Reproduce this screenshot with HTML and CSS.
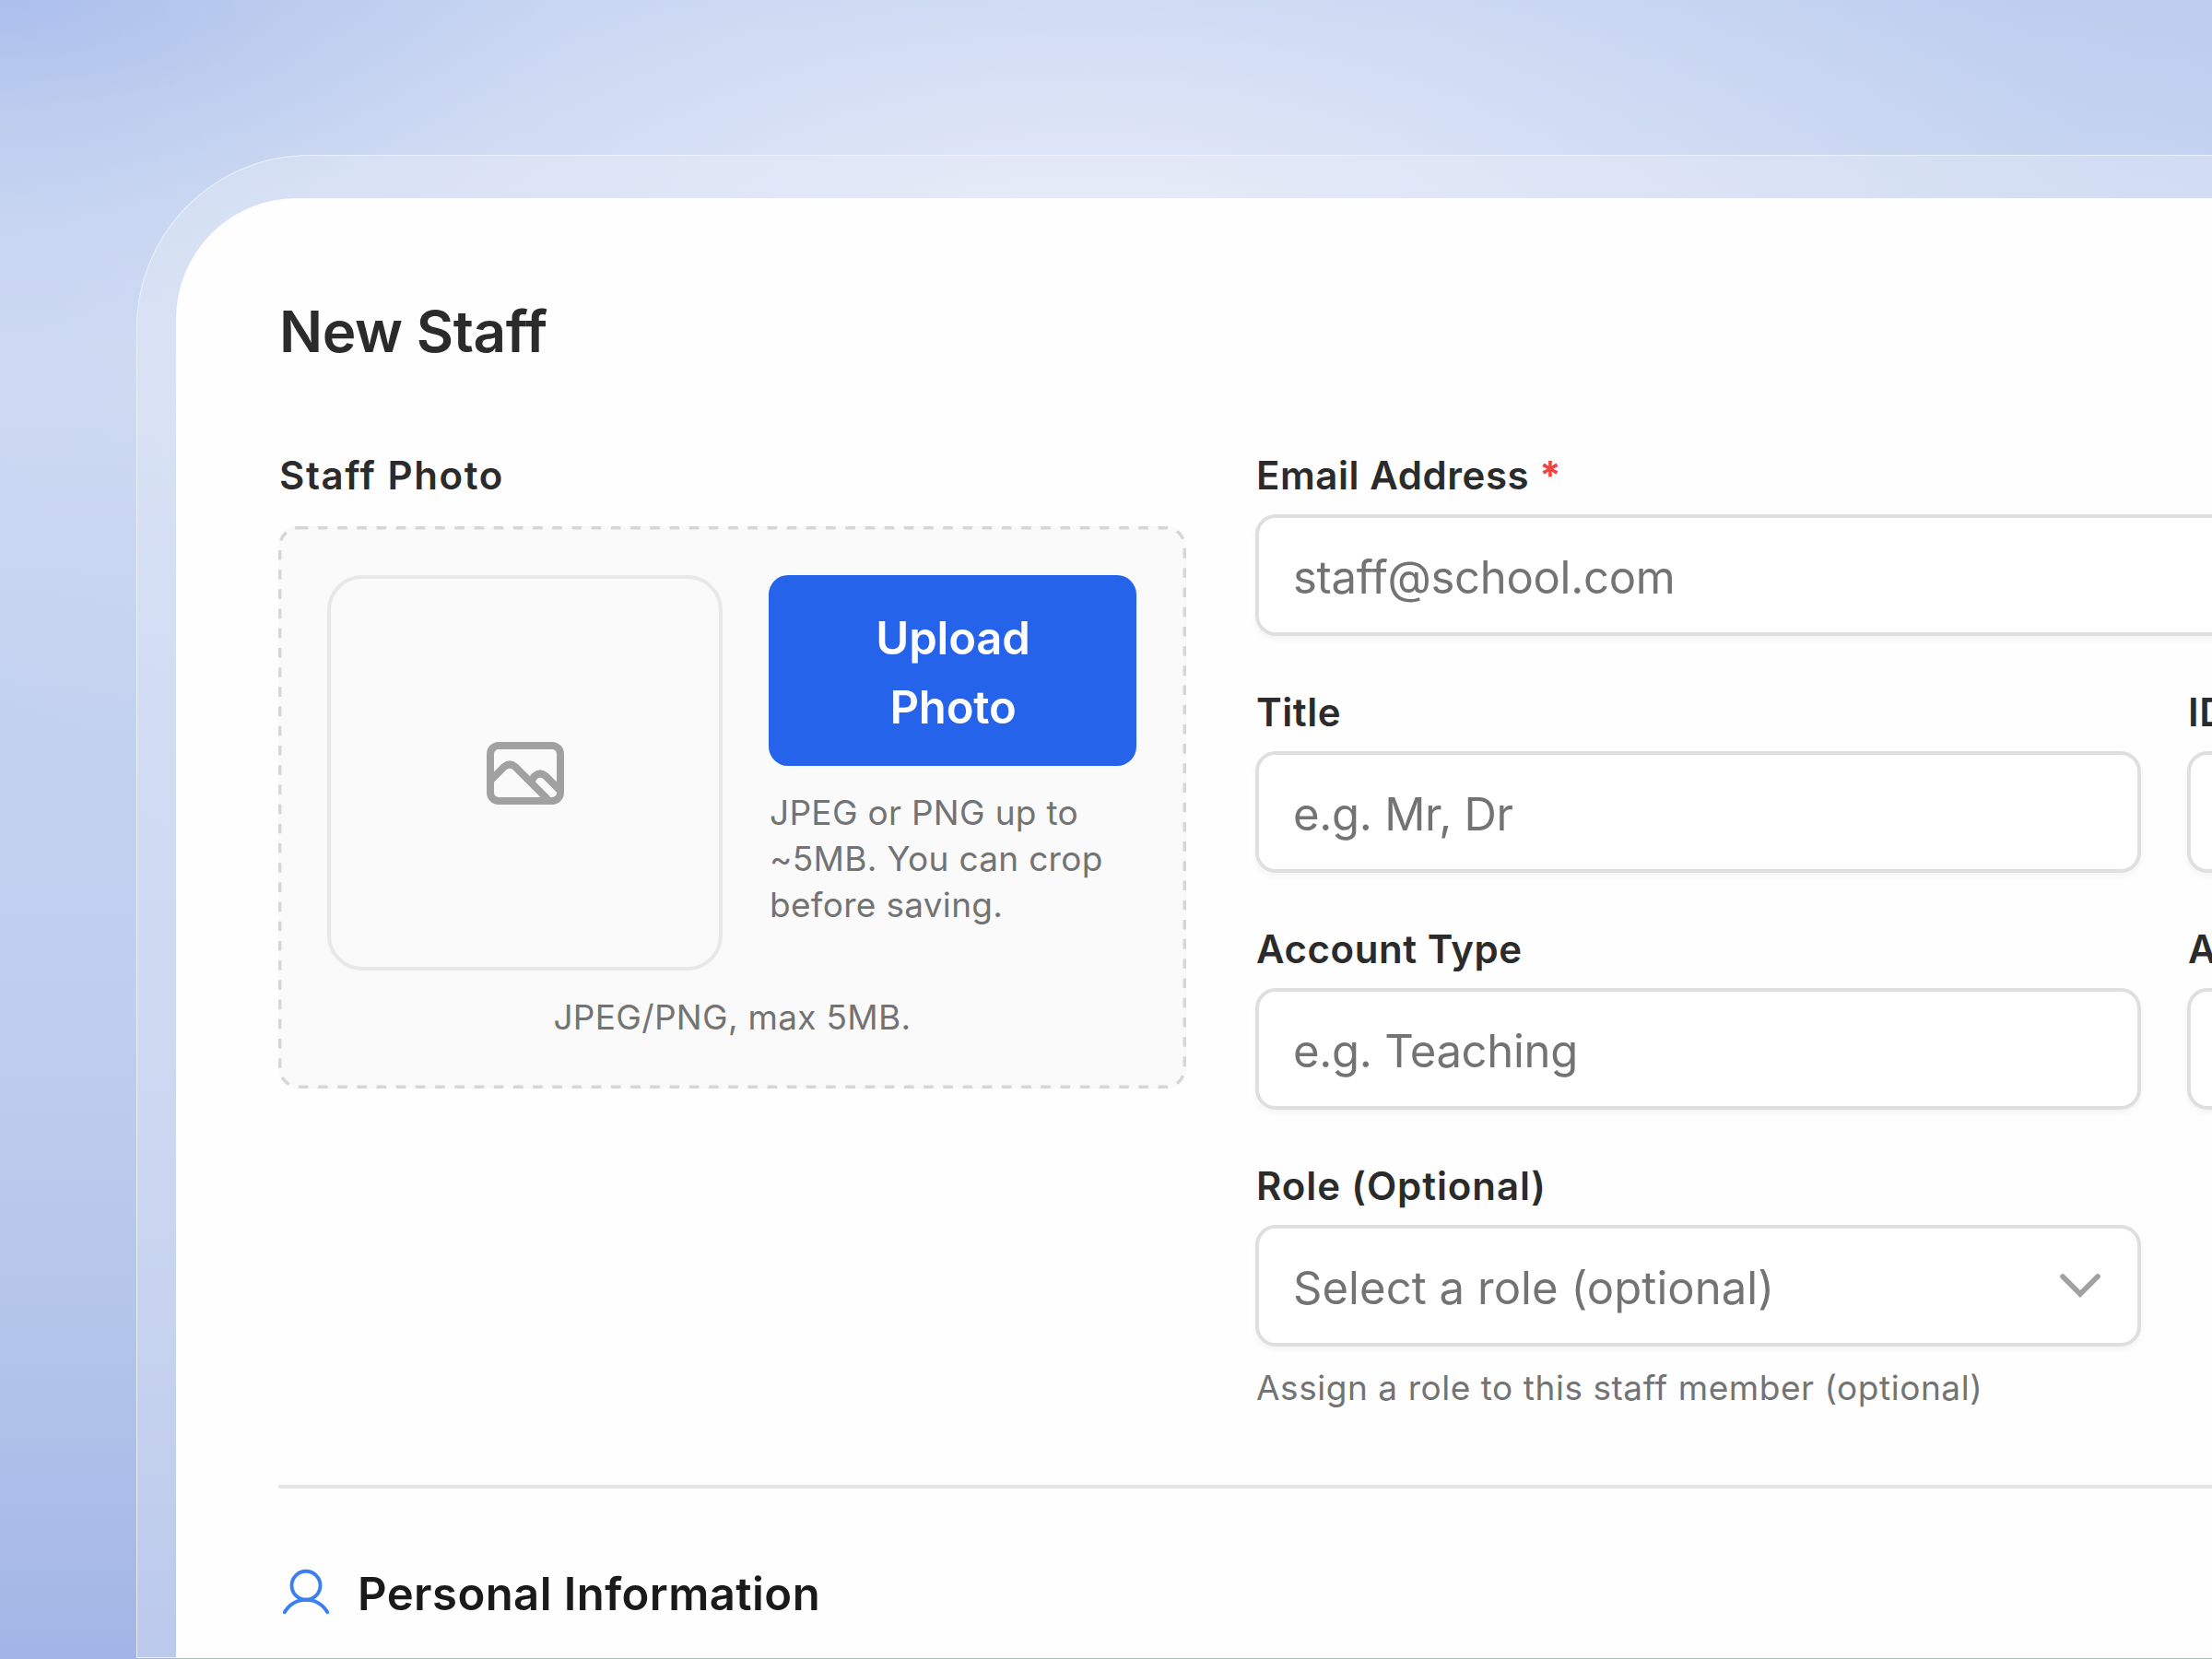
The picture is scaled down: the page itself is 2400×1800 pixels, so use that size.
FILE: index.html
```
<!DOCTYPE html>
<html lang="en">
<head>
    <meta charset="UTF-8">
    <meta name="viewport" content="width=device-width, initial-scale=1.0">
    <title>New Staff</title>
    <link rel="stylesheet" href="styles.css">
</head>
<body>
<div class="frame">
<div class="card">
    <h1 class="page-title">New Staff</h1>
    <div class="form-columns">
        <div class="photo-column">
            <div class="label photo-label">Staff Photo</div>
            <div class="photo-box">
                <svg class="dashes" width="985" height="610">
                    <rect x="1.7" y="1.7" width="981.6" height="606.6" rx="20"/>
                </svg>
                <div class="photo-row">
                    <div class="preview">
                        <svg class="image-icon" width="84" height="68" viewBox="0 0 84 68">
                            <rect x="4" y="4" width="76" height="60" rx="9"/>
                            <path d="M4 42L19 27Q25 22 31 27L66 62"/>
                            <path d="M48 43L52 37Q58 32 64 37L80 53"/>
                        </svg>
                    </div>
                    <div class="upload">
                        <button class="upload-btn" type="button">Upload<br>Photo</button>
                        <p class="hint upload-hint">JPEG or PNG up to<br>~5MB. You can crop<br>before saving.</p>
                    </div>
                </div>
                <p class="hint photo-hint">JPEG/PNG, max 5MB.</p>
            </div>
        </div>
        <div class="fields">
            <div class="field wide">
                <label class="label" for="email">Email Address <span class="required">*</span></label>
                <input class="input" id="email" type="text" placeholder="staff@school.com">
            </div>
            <div class="field">
                <label class="label" for="title">Title</label>
                <input class="input" id="title" type="text" placeholder="e.g. Mr, Dr">
            </div>
            <div class="field">
                <label class="label" for="staff-id">ID</label>
                <input class="input" id="staff-id" type="text">
            </div>
            <div class="field">
                <label class="label" for="account-type">Account Type</label>
                <input class="input" id="account-type" type="text" placeholder="e.g. Teaching">
            </div>
            <div class="field">
                <label class="label" for="account">A</label>
                <input class="input" id="account" type="text">
            </div>
            <div class="field">
                <div class="label role-label">Role (Optional)</div>
                <div class="input select">
                    <span class="select-text">Select a role (optional)</span>
                    <svg class="chevron" width="46" height="28" viewBox="0 0 46 28">
                        <path d="M4 4L23 23L42 4"/>
                    </svg>
                </div>
                <p class="hint role-hint">Assign a role to this staff member (optional)</p>
            </div>
        </div>
    </div>
    <div class="section">
        <svg class="user-icon" width="62" height="62" viewBox="0 0 256 256">
            <circle cx="128" cy="96" r="64"/>
            <path d="M32 216c19.4-33.5 54.6-56 96-56s76.6 22.5 96 56"/>
        </svg>
        <h2 class="section-title">Personal Information</h2>
    </div>
</div>
</div>
</body>
</html>
```
FILE: styles.css
```
* {
    box-sizing: border-box;
}

body {
    margin: 0;
    height: 1800px;
    padding: 168px 0 0 148px;
    overflow: hidden;
    font-family: Inter, "Liberation Sans", sans-serif;
    color: #2b2b2b;
    background:
        radial-gradient(ellipse 620px 240px at 0 0, rgba(163, 184, 234, 0.65) 0%, rgba(170, 190, 234, 0.25) 50%, rgba(163, 184, 234, 0) 100%),
        radial-gradient(ellipse 1600px 800px at 1180px 300px, #e6eafa 0%, rgba(220, 228, 246, 0.7) 35%, rgba(205, 218, 243, 0.3) 70%, rgba(200, 214, 243, 0) 100%),
        linear-gradient(180deg, #b9caee 0%, #c4d2f0 12%, #ced9f2 22%, #c3d1f0 42%, #bfcdef 62%, #b4c5ea 80%, #a3b5e6 100%);
}

.frame {
    height: 1631px;
    padding: 46px 0 0 42px;
    border: 1px solid rgba(238, 245, 255, 0.85);
    border-right: none;
    border-radius: 188px 0 0 0;
    background: rgba(240, 243, 250, 0.32);
}

.card {
    height: 1584px;
    padding: 0 0 0 112px;
    border-radius: 131px 0 0 0;
    background-color: #fefefe;
    overflow: hidden;
}

.page-title {
    margin: 0;
    padding-top: 105px;
    font-size: 62px;
    line-height: 80px;
    font-weight: 600;
    letter-spacing: -0.4px;
}

.form-columns {
    display: flex;
    gap: 75px;
    height: 1215px;
    margin-left: -1px;
    padding-top: 90px;
    border-bottom: 4px solid #e5e5e5;
}

.photo-column {
    width: 985px;
    flex-shrink: 0;
}

.label {
    display: block;
    height: 68px;
    padding-left: 1px;
    font-size: 42px;
    line-height: 52px;
    font-weight: 600;
    letter-spacing: 0.55px;
    white-space: nowrap;
}

.photo-label {
    height: 81px;
    letter-spacing: 1.6px;
}

.role-label {
    letter-spacing: 0.9px;
}

.required {
    color: #ef4444;
    font-weight: 700;
}

.photo-box {
    position: relative;
    height: 610px;
    padding: 53px;
    border-radius: 20px;
    background-color: #fafafa;
}

.dashes {
    position: absolute;
    top: 0;
    left: 0;
    fill: none;
    stroke: #d6d6d6;
    stroke-width: 3.4;
    stroke-dasharray: 10.6 10.6;
}

.photo-row {
    display: flex;
    gap: 50px;
}

.preview {
    width: 429px;
    height: 429px;
    display: flex;
    align-items: center;
    justify-content: center;
    border: 4px solid #e8e8e8;
    border-radius: 38px;
}

.image-icon {
    fill: none;
    stroke: #a1a1a1;
    stroke-width: 8;
}

.upload {
    width: 399px;
}

.upload-btn {
    display: block;
    width: 399px;
    height: 207px;
    padding: 4px 0 0 1px;
    border: none;
    border-radius: 21px;
    background-color: #2563eb;
    color: #fff;
    font-family: inherit;
    font-size: 49px;
    line-height: 75px;
    font-weight: 600;
    letter-spacing: -0.2px;
}

.hint {
    margin: 0;
    font-size: 37px;
    line-height: 50px;
    letter-spacing: 0.3px;
    color: #737373;
    white-space: nowrap;
}

.upload-hint {
    margin-top: 26px;
    padding-left: 1px;
}

.photo-hint {
    margin-top: 26px;
    text-align: center;
}

.fields {
    display: grid;
    grid-template-columns: 961px 961px;
    grid-auto-rows: 257px;
    column-gap: 50px;
}

.wide {
    grid-column: 1 / 3;
}

.input {
    display: block;
    width: 100%;
    height: 132px;
    padding: 4px 38px 0 37px;
    border: 4px solid #dfdfdf;
    border-radius: 22px;
    outline: none;
    background-color: #fff;
    box-shadow: 0 4px 6px rgba(0, 0, 0, 0.04);
    font-family: inherit;
    font-size: 49px;
    letter-spacing: -0.3px;
    color: #737373;
}

.input::placeholder {
    color: #737373;
    opacity: 1;
}

.select {
    display: flex;
    align-items: center;
    justify-content: space-between;
    letter-spacing: 0.05px;
    white-space: nowrap;
}

.chevron {
    margin: 0 1px 4px 0;
    fill: none;
    stroke: #a1a1a1;
    stroke-width: 5.6;
    stroke-linecap: round;
}

.role-hint {
    margin-top: 20px;
    padding-left: 1px;
    letter-spacing: 0.55px;
}

.section {
    display: flex;
    align-items: center;
    gap: 24px;
    margin-left: -1px;
    padding-top: 80px;
}

.user-icon {
    margin: 0 1px 4px -1px;
    fill: none;
    stroke: #3b7ff0;
    stroke-width: 16;
    stroke-linecap: round;
}

.section-title {
    margin: 0;
    font-size: 49px;
    line-height: 70px;
    font-weight: 600;
    letter-spacing: 0.45px;
    color: #1a1a1a;
}
```
